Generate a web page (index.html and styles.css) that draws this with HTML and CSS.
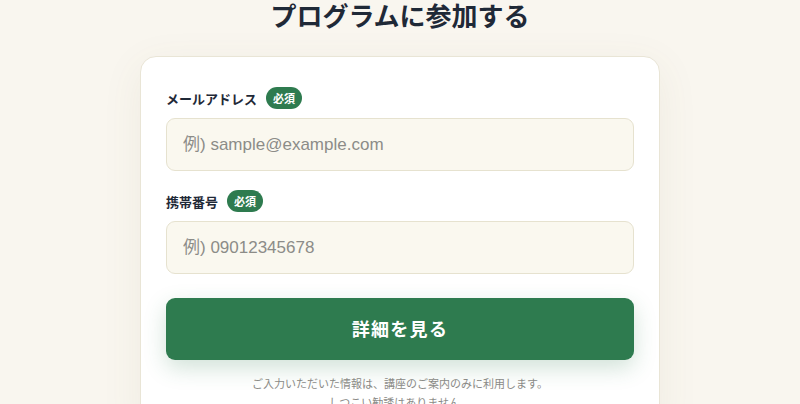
FILE: index.html
```html
<!DOCTYPE html>
<html lang="ja">
<head>
<meta charset="utf-8">
<title>プログラムに参加する</title>
<link rel="stylesheet" href="styles.css">
</head>
<body>
<main class="page">
  <h1 class="title">プログラムに参加する</h1>
  <form class="card">
    <div class="field">
      <div class="label-row">
        <label class="label" for="email">メールアドレス</label>
        <span class="badge">必須</span>
      </div>
      <input class="input" id="email" type="email" placeholder="例) sample@example.com">
    </div>
    <div class="field">
      <div class="label-row">
        <label class="label" for="tel">携帯番号</label>
        <span class="badge">必須</span>
      </div>
      <input class="input" id="tel" type="tel" placeholder="例) 09012345678">
    </div>
    <button class="submit" type="button">詳細を見る</button>
    <p class="note">ご入力いただいた情報は、講座のご案内のみに利用します。<br>しつこい勧誘はありません。</p>
  </form>
</main>
</body>
</html>
```
FILE: styles.css
```css
* { box-sizing: border-box; }
html, body { margin: 0; padding: 0; }
body {
  background: #f9f6ef;
  font-family: "Noto Sans CJK JP", "Noto Sans", sans-serif;
  color: #1f2937;
  overflow: hidden;
}
.page {
  display: flex;
  flex-direction: column;
  align-items: center;
}
.title {
  margin: -2px 0 24px;
  font-size: 26px;
  line-height: 34px;
  font-weight: 700;
  color: #1f2937;
  letter-spacing: 0;
}
.card {
  width: 520px;
  background: #ffffff;
  border: 1px solid #e9e5d6;
  border-radius: 16px;
  box-shadow: 0 10px 40px rgba(120, 105, 60, 0.08);
  padding: 30px 25px 20px;
  display: flex;
  flex-direction: column;
}
.field {
  display: flex;
  flex-direction: column;
  gap: 9px;
  margin-bottom: 19px;
}
.field + .field { margin-bottom: 24px; }
.label-row {
  display: flex;
  align-items: center;
  gap: 9px;
  height: 22px;
}
.label {
  font-size: 13px;
  font-weight: 700;
  color: #1f2937;
}
.badge {
  background: #2e7b4f;
  color: #ffffff;
  font-size: 11px;
  font-weight: 700;
  height: 22px;
  line-height: 22px;
  padding: 0 7px;
  border-radius: 11px;
}
.input {
  width: 100%;
  height: 53px;
  border: 1px solid #e6e2cf;
  background: #faf8ef;
  border-radius: 9px;
  padding: 0 16px;
  font-family: "Liberation Sans", "Noto Sans CJK JP", sans-serif;
  font-size: 17px;
  color: #333;
  outline: none;
}
.input::placeholder { color: #8c8c88; }
.submit {
  width: 100%;
  height: 62px;
  border: none;
  border-radius: 9px;
  padding: 0 0 3px;
  background: #2e7b4f;
  color: #ffffff;
  font-family: "Noto Sans CJK JP", sans-serif;
  font-size: 18px;
  font-weight: 700;
  letter-spacing: 0.07em;
  box-shadow: 0 8px 22px rgba(46, 123, 79, 0.22);
  cursor: pointer;
}
.note {
  margin: 14px 0 0;
  text-align: center;
  font-size: 11px;
  line-height: 19px;
  color: #8a8a86;
}
```
